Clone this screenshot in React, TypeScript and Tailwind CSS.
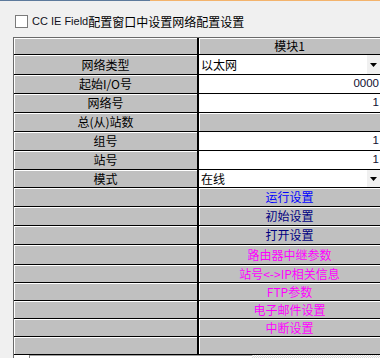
import React from "react";

type Right =
  | { type: "gray"; text: string; color: string }
  | { type: "select"; text: string }
  | { type: "value"; text: string };

type Row = { h: string; label: string; right: Right };

const rows: Row[] = [
  { h: "h-[17px]", label: "", right: { type: "gray", text: "模块1", color: "text-black" } },
  { h: "h-[20px]", label: "网络类型", right: { type: "select", text: "以太网" } },
  { h: "h-[19px]", label: "起始I/O号", right: { type: "value", text: "0000" } },
  { h: "h-[19px]", label: "网络号", right: { type: "value", text: "1" } },
  { h: "h-[19px]", label: "总(从)站数", right: { type: "gray", text: "", color: "text-black" } },
  { h: "h-[19px]", label: "组号", right: { type: "value", text: "1" } },
  { h: "h-[19px]", label: "站号", right: { type: "value", text: "1" } },
  { h: "h-[18px]", label: "模式", right: { type: "select", text: "在线" } },
  { h: "h-[19px]", label: "", right: { type: "gray", text: "运行设置", color: "text-[#0000ff]" } },
  { h: "h-[19px]", label: "", right: { type: "gray", text: "初始设置", color: "text-[#000080]" } },
  { h: "h-[19px]", label: "", right: { type: "gray", text: "打开设置", color: "text-[#000080]" } },
  { h: "h-[20px]", label: "", right: { type: "gray", text: "路由器中继参数", color: "text-[#ff00ff]" } },
  { h: "h-[18px]", label: "", right: { type: "gray", text: "站号<->IP相关信息", color: "text-[#ff00ff]" } },
  { h: "h-[18px]", label: "", right: { type: "gray", text: "FTP参数", color: "text-[#ff00ff]" } },
  { h: "h-[18px]", label: "", right: { type: "gray", text: "电子邮件设置", color: "text-[#ff00ff]" } },
  { h: "h-[18px]", label: "", right: { type: "gray", text: "中断设置", color: "text-[#ff00ff]" } },
  { h: "h-[18px]", label: "", right: { type: "gray", text: "", color: "text-black" } },
];

function Arrow() {
  return (
    <div className="flex h-full w-[13px] items-center justify-center bg-[#f0f0f0]">
      <svg width="7" height="4" viewBox="0 0 7 4">
        <path d="M0 0H7L3.5 4Z" fill="#000" />
      </svg>
    </div>
  );
}

function RightCell({ r }: { r: Right }) {
  if (r.type === "gray") {
    return (
      <div
        className={`flex h-full min-w-0 flex-1 items-center justify-center border-b border-l border-black bg-[#c0c0c0] shadow-[inset_1px_1px_0_#ffffff] ${r.color}`}
      >
        <span className="whitespace-nowrap leading-none">{r.text}</span>
      </div>
    );
  }
  if (r.type === "select") {
    return (
      <div className="flex h-full min-w-0 flex-1 items-center border-b border-l border-black bg-white">
        <span className="flex-1 whitespace-nowrap pl-[2px] leading-none text-black">{r.text}</span>
        <Arrow />
      </div>
    );
  }
  return (
    <div className="flex h-full min-w-0 flex-1 items-center justify-end border-b border-l border-black bg-white pr-[1px]">
      <span className="whitespace-nowrap font-['Liberation_Sans',sans-serif] text-[11.5px] leading-none text-[#101030]">
        {r.text}
      </span>
    </div>
  );
}

export default function App() {
  return (
    <div className="relative h-[358px] w-[380px] overflow-hidden bg-[#f0f0f0] font-['Noto_Sans_CJK_SC','Liberation_Sans',sans-serif] text-[12px] text-black">
      <div className="flex h-px">
        <div className="w-[150px] bg-[#5d7a9c]" />
        <div className="flex-1 bg-[#f3b36c]" />
      </div>
      <div className="flex h-[36px] items-start pl-[15px] pt-[14px]">
        <div className="h-[13px] w-[13px] border border-[#7a7a7a] bg-white" />
        <div className="ml-[4px] flex h-[13px] items-center whitespace-nowrap leading-none">
          <span className="font-['Liberation_Sans',sans-serif] text-[11px] text-[#101020]">CC IE Field</span>
          <span className="text-[12px]">配置窗口中设置网络配置设置</span>
        </div>
      </div>
      <div className="ml-[13px] border-l border-t border-[#6a6a6a]">
        {rows.map((row, i) => (
          <div key={i} className={`flex ${row.h}`}>
            <div className="flex h-full w-[184px] shrink-0 items-center justify-center border-b border-r border-black bg-[#c0c0c0] shadow-[inset_1px_1px_0_#ffffff]">
              <span className="whitespace-nowrap leading-none">{row.label}</span>
            </div>
            <RightCell r={row.right} />
          </div>
        ))}
        <div className="flex h-[4px]">
          <div className="w-[16px] border-r border-[#8a8a8a] bg-white" />
          <div className="w-[222px] border-t border-[#a0a0a0] bg-white" />
          <div className="flex-1 bg-[repeating-conic-gradient(#ffffff_0_25%,#d8d8d8_0_50%)] bg-[length:2px_2px]" />
        </div>
      </div>
    </div>
  );
}
